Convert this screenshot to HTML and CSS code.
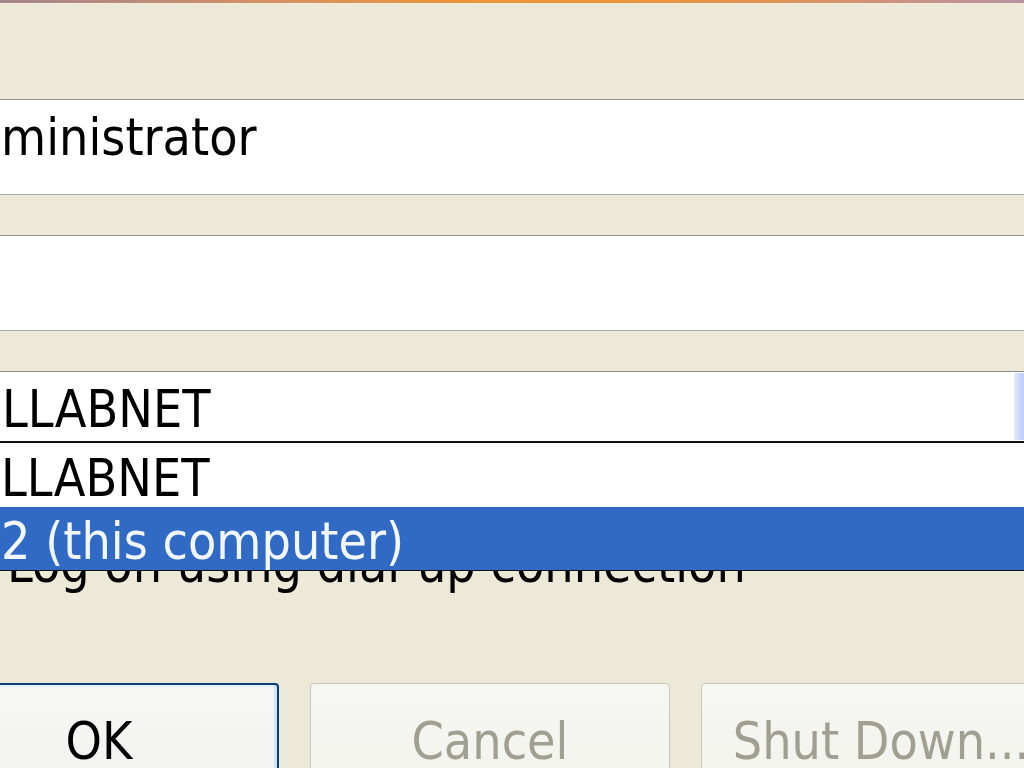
FILE: index.html
```html
<!DOCTYPE html>
<html lang="en">
<head>
<meta charset="utf-8">
<title>Log On to Windows</title>
<link rel="stylesheet" href="styles.css">
</head>
<body>
<div class="dialog">
  <div class="topbar"></div>
  <div class="form">
    <div class="textbox"><span class="value">ministrator</span></div>
    <div class="textbox"></div>
    <div class="combo-wrap">
      <div class="combo">
        <span class="value">LLABNET</span>
        <span class="combo-btn"></span>
      </div>
      <ul class="dropdown">
        <li class="item">LLABNET</li>
        <li class="item selected">2 (this computer)</li>
      </ul>
    </div>
    <div class="dialup">Log on using dial-up connection</div>
  </div>
  <div class="buttons">
    <button class="btn default">OK</button>
    <button class="btn" disabled>Cancel</button>
    <button class="btn" disabled>Shut Down...</button>
  </div>
</div>
</body>
</html>
```

FILE: styles.css
```css
html, body {
  margin: 0;
  padding: 0;
  width: 1024px;
  height: 768px;
  overflow: hidden;
  background: #ece9d8;
}

.dialog {
  font-family: "DejaVu Sans Condensed", "DejaVu Sans", sans-serif;
  font-size: 51.5px;
  line-height: 62px;
  color: #000;
  display: flex;
  flex-direction: column;
}

.topbar {
  height: 3px;
  background: linear-gradient(90deg, #a2868c 0%, #b88a7c 12%, #d79160 28%, #e8963c 45%, #ea963c 60%, #e09454 75%, #c8928a 90%, #b592a0 100%);
  border-bottom: 1px solid #f6ead8;
  margin-bottom: 95px;
}

.form {
  display: flex;
  flex-direction: column;
  gap: 40px;
}

.textbox {
  margin-left: -10px;
  width: 1080px;
  height: 94px;
  box-sizing: content-box;
  background: #fff;
  border-top: 1px solid #979797;
  border-bottom: 1px solid #a9a9a9;
  padding-left: 11px;
}

.textbox .value {
  display: block;
  padding-top: 6px;
}

.combo-wrap {
  position: relative;
}

.combo {
  margin-left: -10px;
  width: 1070px;
  height: 71px;
  box-sizing: border-box;
  background: #fff;
  border: 1px solid #8c8c8c;
  display: flex;
  padding-left: 11px;
}

.combo .value {
  flex: 1;
  padding-top: 6px;
}

.combo-btn {
  width: 43px;
  margin: 1px 1px 1px 0;
  background: linear-gradient(90deg, #dfe7fb 0%, #c3d2f8 15%, #bccdf6 100%);
  border-left: 1px solid #e8eefc;
}

.dropdown {
  position: absolute;
  left: -10px;
  top: 70px;
  width: 1080px;
  margin: 0;
  padding: 0;
  list-style: none;
  background: #fff;
  border-top: 2px solid #111;
  border-bottom: 1px solid #111;
  z-index: 2;
}

.item {
  height: 64px;
  padding-left: 11px;
  padding-top: 4px;
  box-sizing: border-box;
}

.item.selected {
  height: 63px;
  background: #316ac5;
  color: #f2f6ff;
  padding-top: 3px;
  overflow: visible;
}

.dialup {
  margin-top: 51px;
  padding-left: 7px;
  white-space: nowrap;
}

.buttons {
  display: flex;
  gap: 31px;
  margin-left: -81px;
  margin-top: 88px;
}

.btn {
  flex: none;
  width: 360px;
  height: 110px;
  font: inherit;
  line-height: 62px;
  padding: 26px 0 20px;
  text-align: center;
  vertical-align: top;
  border-radius: 4px;
  box-sizing: border-box;
  background: linear-gradient(180deg, #f6f6f2 0%, #f3f3ee 100%);
  border: 1px solid #c8c6b8;
  color: #a19f91;
  white-space: nowrap;
}

.btn.default {
  border: 2px solid #0a3e74;
  color: #000;
  background: linear-gradient(180deg, #f7f7f5 0%, #f1f2ef 100%);
  box-shadow: inset -3px 0 0 #cfe6fb, inset 0 2px 0 #e6f1fb;
  padding: 25px 0 19px;
}
```
